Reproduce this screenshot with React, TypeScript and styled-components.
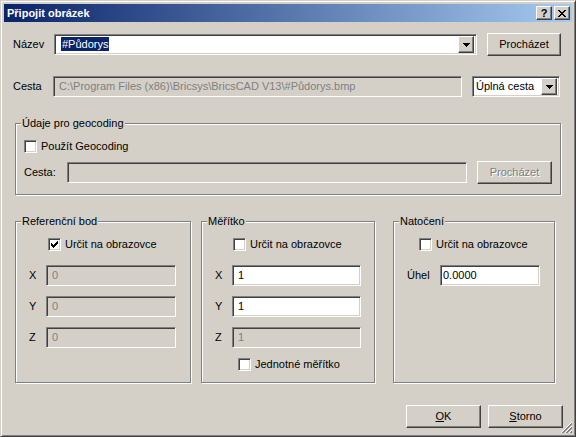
import React from "react";
import styled, { createGlobalStyle, css } from "styled-components";

const FACE = "#D4D0C8";

const Global = createGlobalStyle`
  html, body { margin: 0; padding: 0; background: ${FACE}; }
  body { font-family: "Liberation Sans", Arial, sans-serif; font-size: 11px; color: #000; }
  * { box-sizing: border-box; }
`;

const raised = css`
  border: 1px solid;
  border-color: #fff #404040 #404040 #fff;
  box-shadow: inset -1px -1px #808080;
  background: ${FACE};
`;

const sunken = css`
  border: 1px solid;
  border-color: #808080 #fff #fff #808080;
  box-shadow: inset 1px 1px #404040, inset -1px -1px ${FACE};
`;

const Window = styled.div`
  width: 576px;
  height: 437px;
  background: ${FACE};
  border: 1px solid;
  border-color: ${FACE} #404040 #404040 ${FACE};
  box-shadow: inset 1px 1px #fff, inset -1px -1px #808080;
  padding: 3px;
  display: flex;
  flex-direction: column;
  position: relative;
`;

const TitleBar = styled.div`
  height: 18px;
  flex-shrink: 0;
  background: linear-gradient(to right, #0a246a, #a6caf0);
  display: flex;
  align-items: center;
  padding: 0 2px 0 3px;
  gap: 2px;
`;

const Title = styled.div`
  flex: 1;
  color: #fff;
  font-weight: bold;
  font-size: 11px;
  line-height: 13px;
`;

const CaptionButton = styled.div`
  ${raised};
  width: 16px;
  height: 14px;
  display: flex;
  align-items: center;
  justify-content: center;
  font-weight: bold;
  font-size: 11px;
  line-height: 11px;
  color: #000;
`;

const Body = styled.div`
  flex: 1;
  display: flex;
  flex-direction: column;
  position: relative;
`;

const Row = styled.div<{ $top: number; $left: number; $h: number }>`
  display: flex;
  align-items: center;
  height: ${(p) => p.$h}px;
  margin: ${(p) => p.$top}px 0 0 ${(p) => p.$left}px;
`;

const Label = styled.span<{ $w: number }>`
  width: ${(p) => p.$w}px;
  flex-shrink: 0;
  line-height: 13px;
  white-space: nowrap;
`;

const Combo = styled.div<{ $w: number }>`
  ${sunken};
  width: ${(p) => p.$w}px;
  height: 21px;
  background: #fff;
  display: flex;
  align-items: center;
  padding: 2px 2px 2px 2px;
`;

const ComboText = styled.div<{ $pad: number }>`
  flex: 1;
  padding-left: ${(p) => p.$pad}px;
  line-height: 13px;
  white-space: nowrap;
`;

const Selected = styled.span`
  background: #0a246a;
  color: #fff;
  padding: 1px 1px;
`;

const ArrowButton = styled.div`
  ${raised};
  width: 16px;
  height: 17px;
  flex-shrink: 0;
  display: flex;
  align-items: center;
  justify-content: center;
`;

const TextBox = styled.div<{ $w: number; $disabled?: boolean }>`
  ${sunken};
  width: ${(p) => p.$w}px;
  height: 21px;
  flex-shrink: 0;
  background: ${(p) => (p.$disabled ? FACE : "#fff")};
  color: ${(p) => (p.$disabled ? "#808080" : "#000")};
  padding: 0 0 0 5px;
  line-height: 19px;
  white-space: nowrap;
  overflow: hidden;
`;

const Button = styled.div<{ $w: number; $disabled?: boolean; $ml?: number }>`
  ${raised};
  width: ${(p) => p.$w}px;
  height: 23px;
  flex-shrink: 0;
  margin-left: ${(p) => p.$ml ?? 0}px;
  display: flex;
  align-items: center;
  justify-content: center;
  line-height: 13px;
  color: ${(p) => (p.$disabled ? "#808080" : "#000")};
  text-shadow: ${(p) => (p.$disabled ? "1px 1px #fff" : "none")};
`;

const Group = styled.div<{ $w: number; $h: number }>`
  position: relative;
  width: ${(p) => p.$w}px;
  height: ${(p) => p.$h}px;
  flex-shrink: 0;
  border: 1px solid #808080;
  box-shadow: inset 1px 1px #fff, 1px 1px #fff;
  display: flex;
  flex-direction: column;
`;

const Legend = styled.span`
  position: absolute;
  top: -7px;
  left: 5px;
  padding: 0 1px;
  background: ${FACE};
  line-height: 13px;
  white-space: nowrap;
`;

const GeoGroup = styled(Group)`
  margin: 26px 0 0 11px;
  padding: 16px 0 0 8px;
`;

const GroupsRow = styled.div`
  display: flex;
  margin: 26px 0 0 11px;
`;

const FieldGroup = styled(Group)<{ $ml: number }>`
  margin-left: ${(p) => p.$ml}px;
  padding: 16px 0 0 13px;
`;

const CheckRow = styled.label<{ $ml: number; $mt?: number }>`
  display: flex;
  align-items: center;
  height: 13px;
  margin-left: ${(p) => p.$ml}px;
  margin-top: ${(p) => p.$mt ?? 0}px;
  gap: 4px;
  line-height: 13px;
  white-space: nowrap;
`;

const CheckBox = styled.span`
  ${sunken};
  width: 13px;
  height: 13px;
  background: #fff;
  flex-shrink: 0;
  display: flex;
  align-items: center;
  justify-content: center;
`;

const FieldRow = styled.div<{ $mt: number }>`
  display: flex;
  align-items: center;
  height: 21px;
  margin-top: ${(p) => p.$mt}px;
`;

const GeoPathRow = styled.div`
  display: flex;
  align-items: center;
  height: 23px;
  margin-top: 8px;
`;

const Footer = styled.div`
  display: flex;
  justify-content: flex-end;
  gap: 7px;
  margin: 22px 9px 0 0;
`;

const Grip = styled.svg`
  position: absolute;
  right: 0;
  bottom: 0;
`;

const U = styled.span`
  text-decoration: underline;
`;

const Arrow = () => (
  <svg width="7" height="4" viewBox="0 0 7 4" shapeRendering="crispEdges">
    <path d="M0 0h7v1H0zM1 1h5v1H1zM2 2h3v1H2zM3 3h1v1H3z" fill="#000" />
  </svg>
);

const Check = ({ checked }: { checked?: boolean }) => (
  <CheckBox>
    {checked && (
      <svg width="7" height="7" viewBox="0 0 7 7" shapeRendering="crispEdges">
        <path
          d="M6 0h1v3H6zM5 1h1v3H5zM4 2h1v3H4zM3 3h1v3H3zM2 4h1v3H2zM1 3h1v3H1zM0 2h1v3H0z"
          fill="#000"
        />
      </svg>
    )}
  </CheckBox>
);

const CloseGlyph = () => (
  <svg width="8" height="7" viewBox="0 0 8 7" shapeRendering="crispEdges">
    <path
      d="M0 0h2v1H0zM6 0h2v1H6zM1 1h2v1H1zM5 1h2v1H5zM2 2h4v1H2zM3 3h2v1H3zM2 4h4v1H2zM1 5h2v1H1zM5 5h2v1H5zM0 6h2v1H0zM6 6h2v1H6z"
      fill="#000"
    />
  </svg>
);

export default function App() {
  return (
    <>
      <Global />
      <Window>
        <TitleBar>
          <Title>Připojit obrázek</Title>
          <CaptionButton>?</CaptionButton>
          <CaptionButton>
            <CloseGlyph />
          </CaptionButton>
        </TitleBar>
        <Body>
          <Row $top={11} $left={9} $h={23}>
            <Label $w={41}>Název</Label>
            <Combo $w={423}>
              <ComboText $pad={4}>
                <Selected>#Půdorys</Selected>
              </ComboText>
              <ArrowButton>
                <Arrow />
              </ArrowButton>
            </Combo>
            <Button $w={74} $ml={10}>
              Procházet
            </Button>
          </Row>

          <Row $top={20} $left={9} $h={21}>
            <Label $w={40}>Cesta</Label>
            <TextBox $w={409} $disabled>
              C:\Program Files (x86)\Bricsys\BricsCAD V13\#Půdorys.bmp
            </TextBox>
            <Combo $w={88} style={{ marginLeft: 10 }}>
              <ComboText $pad={1}>Úplná cesta</ComboText>
              <ArrowButton>
                <Arrow />
              </ArrowButton>
            </Combo>
          </Row>

          <GeoGroup $w={546} $h={72}>
            <Legend>Údaje pro geocoding</Legend>
            <CheckRow $ml={0}>
              <Check />
              Použít Geocoding
            </CheckRow>
            <GeoPathRow>
              <Label $w={43}>Cesta:</Label>
              <TextBox $w={400} $disabled />
              <Button $w={75} $ml={10} $disabled>
                Procházet
              </Button>
            </GeoPathRow>
          </GeoGroup>

          <GroupsRow>
            <FieldGroup $w={176} $h={162} $ml={0}>
              <Legend>Referenční bod</Legend>
              <CheckRow $ml={19}>
                <Check checked />
                Určit na obrazovce
              </CheckRow>
              <FieldRow $mt={14}>
                <Label $w={17}>X</Label>
                <TextBox $w={130} $disabled>0</TextBox>
              </FieldRow>
              <FieldRow $mt={10}>
                <Label $w={17}>Y</Label>
                <TextBox $w={130} $disabled>0</TextBox>
              </FieldRow>
              <FieldRow $mt={10}>
                <Label $w={17}>Z</Label>
                <TextBox $w={130} $disabled>0</TextBox>
              </FieldRow>
            </FieldGroup>

            <FieldGroup $w={174} $h={162} $ml={10}>
              <Legend>Měřítko</Legend>
              <CheckRow $ml={18}>
                <Check />
                Určit na obrazovce
              </CheckRow>
              <FieldRow $mt={14}>
                <Label $w={17}>X</Label>
                <TextBox $w={129}>1</TextBox>
              </FieldRow>
              <FieldRow $mt={10}>
                <Label $w={17}>Y</Label>
                <TextBox $w={129}>1</TextBox>
              </FieldRow>
              <FieldRow $mt={10}>
                <Label $w={17}>Z</Label>
                <TextBox $w={129} $disabled>1</TextBox>
              </FieldRow>
              <CheckRow $ml={23} $mt={10}>
                <Check />
                Jednotné měřítko
              </CheckRow>
            </FieldGroup>

            <FieldGroup $w={162} $h={162} $ml={18}>
              <Legend>Natočení</Legend>
              <CheckRow $ml={12}>
                <Check />
                Určit na obrazovce
              </CheckRow>
              <FieldRow $mt={14}>
                <Label $w={33}>Úhel</Label>
                <TextBox $w={100} style={{ paddingLeft: 2 }}>0.0000</TextBox>
              </FieldRow>
            </FieldGroup>
          </GroupsRow>

          <Footer>
            <Button $w={75}>
              <U>O</U>K
            </Button>
            <Button $w={75}>
              <U>S</U>torno
            </Button>
          </Footer>

          <Grip width="12" height="12" viewBox="0 0 12 12" shapeRendering="crispEdges">
            <path d="M11 1h1v1h-1zM10 2h1v1h-1zM9 3h1v1H9zM8 4h1v1H8zM7 5h1v1H7zM6 6h1v1H6zM5 7h1v1H5zM4 8h1v1H4zM3 9h1v1H3zM2 10h1v1H2zM1 11h1v1H1z" fill="#fff" />
            <path d="M11 2h1v2h-1zM10 3h1v2h-1zM9 4h1v2H9zM8 5h1v2H8zM7 6h1v2H7zM6 7h1v2H6zM5 8h1v2H5zM4 9h1v2H4zM3 10h1v2H3zM2 11h1v1H2z" fill="#808080" />
            <path d="M11 5h1v1h-1zM10 6h1v1h-1zM9 7h1v1H9zM8 8h1v1H8zM7 9h1v1H7zM6 10h1v1H6zM5 11h1v1H5z" fill="#fff" />
            <path d="M11 6h1v2h-1zM10 7h1v2h-1zM9 8h1v2H9zM8 9h1v2H8zM7 10h1v2H7zM6 11h1v1H6z" fill="#808080" />
            <path d="M11 9h1v1h-1zM10 10h1v1h-1zM9 11h1v1H9z" fill="#fff" />
            <path d="M11 10h1v2h-1zM10 11h1v1h-1z" fill="#808080" />
          </Grip>
        </Body>
      </Window>
    </>
  );
}
